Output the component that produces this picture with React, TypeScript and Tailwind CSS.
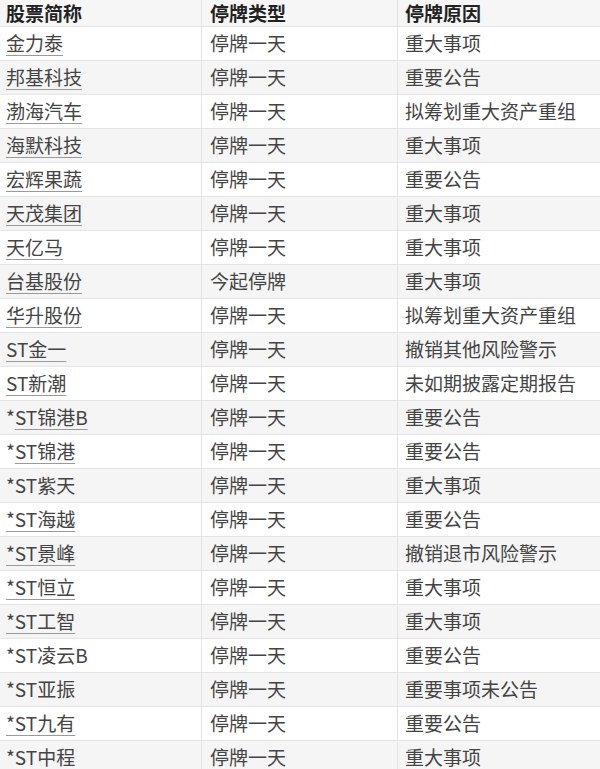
import React from 'react';

type Row = {
  pre?: string;
  name: string;
  link: boolean;
  type: string;
  reason: string;
};

const rows: Row[] = [
  { name: '金力泰', link: true, type: '停牌一天', reason: '重大事项' },
  { name: '邦基科技', link: true, type: '停牌一天', reason: '重要公告' },
  { name: '渤海汽车', link: true, type: '停牌一天', reason: '拟筹划重大资产重组' },
  { name: '海默科技', link: true, type: '停牌一天', reason: '重大事项' },
  { name: '宏辉果蔬', link: true, type: '停牌一天', reason: '重要公告' },
  { name: '天茂集团', link: true, type: '停牌一天', reason: '重大事项' },
  { name: '天亿马', link: true, type: '停牌一天', reason: '重大事项' },
  { name: '台基股份', link: true, type: '今起停牌', reason: '重大事项' },
  { name: '华升股份', link: true, type: '停牌一天', reason: '拟筹划重大资产重组' },
  { name: 'ST金一', link: true, type: '停牌一天', reason: '撤销其他风险警示' },
  { name: 'ST新潮', link: true, type: '停牌一天', reason: '未如期披露定期报告' },
  { pre: '*', name: 'ST锦港B', link: true, type: '停牌一天', reason: '重要公告' },
  { pre: '*', name: 'ST锦港', link: true, type: '停牌一天', reason: '重要公告' },
  { name: '*ST紫天', link: false, type: '停牌一天', reason: '重大事项' },
  { name: '*ST海越', link: true, type: '停牌一天', reason: '重要公告' },
  { name: '*ST景峰', link: true, type: '停牌一天', reason: '撤销退市风险警示' },
  { name: '*ST恒立', link: true, type: '停牌一天', reason: '重大事项' },
  { name: '*ST工智', link: true, type: '停牌一天', reason: '重大事项' },
  { name: '*ST凌云B', link: false, type: '停牌一天', reason: '重要公告' },
  { name: '*ST亚振', link: false, type: '停牌一天', reason: '重要事项未公告' },
  { name: '*ST九有', link: true, type: '停牌一天', reason: '重要公告' },
  { name: '*ST中程', link: true, type: '停牌一天', reason: '重大事项' },
];

const cell = 'flex items-center border-b border-[#e3e3e3] whitespace-nowrap';

const App = () => {
  return (
    <div
      className="w-[600px] bg-white text-[19px] text-[#444] overflow-hidden"
      style={{ fontFamily: '"Microsoft YaHei", "Noto Sans CJK SC", sans-serif' }}
    >
      <div className="grid grid-cols-[201px_196px_203px]">
        {/* header */}
        <div className={`${cell} h-[27px] pl-[6px] bg-[#f6f6f6] font-bold text-[#222]`}>股票简称</div>
        <div className={`${cell} h-[27px] pl-[8px] bg-[#f6f6f6] border-l font-bold text-[#222]`}>停牌类型</div>
        <div className={`${cell} h-[27px] pl-[7px] bg-[#f6f6f6] border-l font-bold text-[#222]`}>停牌原因</div>

        {rows.map((r, i) => {
          const bg = i % 2 === 1 ? 'bg-[#f5f5f5]' : 'bg-white';
          return (
            <React.Fragment key={r.name}>
              <div className={`${cell} ${bg} h-[34px] pl-[6px]`}>
                {r.pre}
                {r.link ? (
                  <a className="underline underline-offset-[4px] decoration-1 decoration-[#9a9a9a]">{r.name}</a>
                ) : (
                  <span>{r.name}</span>
                )}
              </div>
              <div className={`${cell} ${bg} h-[34px] pl-[8px] border-l`}>{r.type}</div>
              <div className={`${cell} ${bg} h-[34px] pl-[7px] border-l`}>{r.reason}</div>
            </React.Fragment>
          );
        })}
      </div>
    </div>
  );
};

export default App;
